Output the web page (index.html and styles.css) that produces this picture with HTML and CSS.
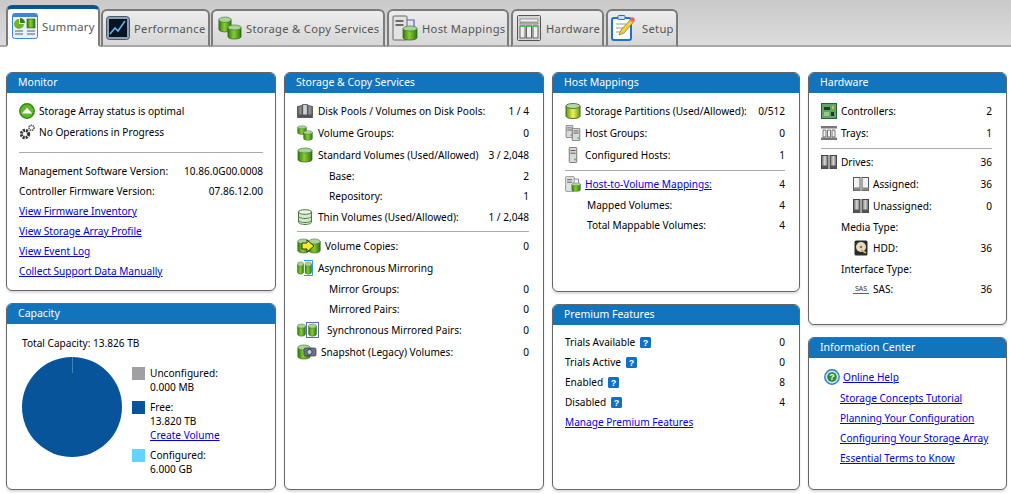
FILE: index.html
```html
<!DOCTYPE html>
<html lang="en">
<head>
    <meta charset="UTF-8">
    <title>Summary</title>
    <link rel="stylesheet" href="styles.css">
</head>
<body>
    <!-- shared icons -->
    <svg class="defs" width="0" height="0">
        <defs>
            <linearGradient id="green" x1="0" x2="1" y1="0" y2="0">
                <stop offset="0" stop-color="#2f7d12"/>
                <stop offset="0.45" stop-color="#8ccb2e"/>
                <stop offset="1" stop-color="#2c7a10"/>
            </linearGradient>
            <linearGradient id="yellow" x1="0" x2="1" y1="0" y2="0">
                <stop offset="0" stop-color="#5d9a12"/>
                <stop offset="0.5" stop-color="#f2f05a"/>
                <stop offset="1" stop-color="#6a9c14"/>
            </linearGradient>
            <linearGradient id="metal" x1="0" x2="1" y1="0" y2="0">
                <stop offset="0" stop-color="#5f5f5f"/>
                <stop offset="0.5" stop-color="#d8d8d8"/>
                <stop offset="1" stop-color="#666"/>
            </linearGradient>
            <symbol id="cyl" viewBox="0 0 16 16" preserveAspectRatio="none">
                <path d="M1 3.500v9c0 1.600 3 2.500 7 2.500s7-.9 7-2.500v-9z" fill="url(#green)" stroke="#2d5d1a" stroke-width=".7"/>
                <ellipse cx="8" cy="3.500" rx="7" ry="2.500" fill="#a9d39a" stroke="#4c7d3c" stroke-width=".7"/>
            </symbol>
            <symbol id="cyls" viewBox="0 0 16 16">
                <use href="#cyl" x="0" y="0" width="10" height="10"/>
                <use href="#cyl" x="6" y="5" width="10" height="11"/>
            </symbol>
            <symbol id="drives" viewBox="0 0 16 16">
                <rect x=".5" y="1.500" width="6.500" height="13" fill="url(#metal)" stroke="#444"/>
                <rect x="9" y="1.500" width="6.500" height="13" fill="url(#metal)" stroke="#444"/>
                <path d="M1 11.500h6v3H1zM9.500 11.500h6v3h-6z" fill="#555"/>
            </symbol>
            <symbol id="pool" viewBox="0 0 16 16">
                <path d="M.5 3.500L5 2.500v12H.5zM5.500 1.500h5v13h-5zM11 2.500l4.500 1v11H11z" fill="url(#metal)" stroke="#444" stroke-width=".8"/>
                <path d="M1 11.500h14v3H1z" fill="#555"/>
            </symbol>
            <symbol id="drives-light" viewBox="0 0 16 16">
                <rect x=".5" y="1.500" width="6.500" height="13" fill="#f2f2f2" stroke="#555"/>
                <rect x="9" y="1.500" width="6.500" height="13" fill="#f2f2f2" stroke="#555"/>
                <path d="M1 11.500h6v3H1zM9.500 11.500h6v3h-6z" fill="#888"/>
            </symbol>
            <symbol id="server" viewBox="0 0 12 18" preserveAspectRatio="none">
                <rect x="1.500" y=".5" width="9" height="17" rx="1" fill="#d9d9d9" stroke="#666"/>
                <path d="M3 4h6M3 7h6" stroke="#444"/>
                <rect x="7.500" y="13" width="2" height="2" fill="#2fd03a"/>
            </symbol>
            <symbol id="hostvol" viewBox="0 0 26 26">
                <rect x="1" y="1" width="14" height="24" rx="1" fill="#e2e2e2" stroke="#666"/>
                <path d="M3.500 6h8M3.500 10h8" stroke="#444" stroke-width="1.400"/>
                <path d="M15 5h7v7" fill="none" stroke="#5c5cc8" stroke-width="1.200"/>
                <use href="#cyl" x="10" y="10" width="16" height="16"/>
            </symbol>
            <symbol id="help" viewBox="0 0 11 11">
                <rect width="11" height="11" rx="1.500" fill="#1170c0"/>
                <text x="5.500" y="9" text-anchor="middle" font-family="Liberation Sans" font-weight="700" font-size="9" fill="#fff">?</text>
            </symbol>
        </defs>
    </svg>

    <nav class="tabbar">
        <a class="tab active">
            <svg class="tab-icon" viewBox="0 0 26 26">
                <rect x=".5" y=".5" width="25" height="25" rx="2" fill="#e8f1fb" stroke="#3d86d6"/>
                <rect x="1" y="1" width="24" height="3" fill="#3d86d6"/>
                <path d="M2 11a5 5 0 0 1 5-5v5h5a5 5 0 0 1-10 0z" fill="#6fb52a"/>
                <path d="M8 5a5 5 0 0 1 5 5H8z" fill="#3a7d18"/>
                <rect x="15" y="6" width="8" height="9" fill="url(#green)" stroke="#2d5d1a" stroke-width=".6"/>
                <path d="M3 18h8M3 21h8M15 18h8M15 21h8" stroke="#8a8a8a" stroke-width="1.300"/>
            </svg>
            <span>Summary</span>
        </a>
        <a class="tab tab-perf">
            <svg class="tab-icon" viewBox="0 0 24 24">
                <rect x=".5" y=".5" width="23" height="23" rx="3" fill="#8ea0b5" stroke="#4c5a6a"/>
                <rect x="3" y="3" width="18" height="18" fill="#0a1320"/>
                <path d="M4 18l5-6 3 3 7-10" fill="none" stroke="#5cb8f0" stroke-width="1.600"/>
            </svg>
            <span>Performance</span>
        </a>
        <a class="tab tab-storage">
            <svg class="tab-icon" viewBox="0 0 24 24">
                <use href="#cyl" x="0" y="0" width="14" height="17"/>
                <use href="#cyl" x="9" y="8" width="15" height="16"/>
            </svg>
            <span>Storage &amp; Copy Services</span>
        </a>
        <a class="tab tab-host">
            <svg class="tab-icon" viewBox="0 0 26 26"><use href="#hostvol"/></svg>
            <span>Host Mappings</span>
        </a>
        <a class="tab tab-hw">
            <svg class="tab-icon" viewBox="0 0 24 26">
                <rect x=".5" y=".5" width="23" height="25" rx="1" fill="#d5d5d5" stroke="#555"/>
                <path d="M3 4h18v3H3zM3 8h18v1H3z" fill="#f0f0f0" stroke="#666" stroke-width=".6"/>
                <rect x="3" y="11" width="5" height="12" fill="#eee" stroke="#444" stroke-width=".8"/>
                <rect x="9.500" y="11" width="5" height="12" fill="#eee" stroke="#444" stroke-width=".8"/>
                <rect x="16" y="11" width="5" height="12" fill="#eee" stroke="#444" stroke-width=".8"/>
                <path d="M3 11h5M9.500 11h5M16 11h5" stroke="#2ed03a" stroke-width="1.400"/>
            </svg>
            <span>Hardware</span>
        </a>
        <a class="tab tab-setup">
            <svg class="tab-icon" viewBox="0 0 24 26">
                <rect x="1" y="3" width="19" height="22" rx="2" fill="#fff" stroke="#1d73c8" stroke-width="2"/>
                <rect x="7" y=".5" width="7" height="4" rx="1" fill="#cfe0f2" stroke="#1d73c8"/>
                <path d="M5 9h10M5 13h7M5 17h5" stroke="#9a9a9a"/>
                <path d="M8 20l2-5L20 4l3 2.500L13 18z" fill="#f2d23a" stroke="#8a6d10" stroke-width=".7"/>
                <circle cx="21.500" cy="4.500" r="2.300" fill="#e8606a"/>
            </svg>
            <span>Setup</span>
        </a>
    </nav>

    <main class="dashboard">
        <div class="col col-1">
            <section class="panel panel-monitor">
                <h2>Monitor</h2>
                <div class="panel-body">
                    <div class="row">
                        <svg class="ico" viewBox="0 0 16 16"><circle cx="8" cy="8" r="7.200" fill="#62b82a" stroke="#2f8a12" stroke-width="1.500"/><path d="M2.800 10.500L8 4.800l5.200 5.700z" fill="#fff"/></svg>
                        <span class="label">Storage Array status is optimal</span>
                    </div>
                    <div class="row">
                        <svg class="ico" viewBox="0 0 16 16"><circle cx="6" cy="10" r="3.600" fill="none" stroke="#333" stroke-width="3.200" stroke-dasharray="2 .9"/><circle cx="12.500" cy="3.800" r="2.500" fill="none" stroke="#666" stroke-width="1.800" stroke-dasharray="1.500 .6"/></svg>
                        <span class="label">No Operations in Progress</span>
                    </div>
                    <hr class="sep-monitor">
                    <div class="row line"><span>Management Software Version:</span><span>10.86.0G00.0008</span></div>
                    <div class="row line"><span>Controller Firmware Version:</span><span>07.86.12.00</span></div>
                    <div class="row line"><a href="#">View Firmware Inventory</a></div>
                    <div class="row line"><a href="#">View Storage Array Profile</a></div>
                    <div class="row line"><a href="#">View Event Log</a></div>
                    <div class="row line"><a href="#">Collect Support Data Manually</a></div>
                </div>
            </section>
            <section class="panel panel-capacity">
                <h2>Capacity</h2>
                <div class="panel-body capacity-body">
                    <p class="total">Total Capacity: 13.826 TB</p>
                    <div class="capacity-chart">
                        <svg class="pie" viewBox="0 0 100 100"><circle cx="50" cy="50" r="50" fill="#07549a"/><path d="M50.500 0v16" stroke="#3f83bd"/></svg>
                        <div class="legend">
                            <div class="legend-item"><i class="swatch swatch-gray"></i><div>Unconfigured:<br>0.000 MB</div></div>
                            <div class="legend-item"><i class="swatch swatch-blue"></i><div>Free:<br>13.820 TB<br><a href="#">Create Volume</a></div></div>
                            <div class="legend-item"><i class="swatch swatch-cyan"></i><div>Configured:<br>6.000 GB</div></div>
                        </div>
                    </div>
                </div>
            </section>
        </div>

        <div class="col col-2">
            <section class="panel panel-fill">
                <h2>Storage &amp; Copy Services</h2>
                <div class="panel-body">
                    <div class="row"><svg class="ico" viewBox="0 0 16 16"><use href="#pool"/></svg><span class="label">Disk Pools / Volumes on Disk Pools:</span><span class="val">1 / 4</span></div>
                    <div class="row"><svg class="ico" viewBox="0 0 16 16"><use href="#cyls"/></svg><span class="label">Volume Groups:</span><span class="val">0</span></div>
                    <div class="row"><svg class="ico" viewBox="0 0 16 16"><use href="#cyl"/></svg><span class="label">Standard Volumes (Used/Allowed)</span><span class="val">3 / 2,048</span></div>
                    <div class="row line sub"><span>Base:</span><span>2</span></div>
                    <div class="row line sub"><span>Repository:</span><span>1</span></div>
                    <div class="row"><svg class="ico" viewBox="0 0 16 16"><path d="M1.500 3v10c0 1.500 3 2.500 6.500 2.500s6.500-1 6.500-2.500V3z" fill="#d8e8d0" stroke="#4a7a3a"/><path d="M1.500 7c0 1.500 3 2.500 6.500 2.500S14.500 8.500 14.500 7M1.500 11c0 1.500 3 2.500 6.500 2.500s6.500-1 6.500-2.500" fill="none" stroke="#4a7a3a"/><ellipse cx="8" cy="3" rx="6.500" ry="2.300" fill="#eef5ea" stroke="#4a7a3a"/></svg><span class="label">Thin Volumes (Used/Allowed):</span><span class="val">1 / 2,048</span></div>
                    <hr class="sep-storage">
                    <div class="row"><svg class="ico ico-wide" viewBox="0 0 24 16"><use href="#cyl" x="0" y="0" width="13" height="16"/><use href="#cyl" x="11" y="0" width="13" height="16"/><path d="M5 5h5V2l7 6-7 6v-3H5z" fill="#f5ee1e" stroke="#222" stroke-width=".9"/></svg><span class="label">Volume Copies:</span><span class="val">0</span></div>
                    <div class="row"><svg class="ico" viewBox="0 0 16 16"><use href="#cyl" x="0" y="1" width="7" height="14"/><use href="#cyl" x="7.500" y="1" width="7.500" height="14"/><path d="M7 .5h8.500v15H7" fill="none" stroke="#2a9ce8"/></svg><span class="label">Asynchronous Mirroring</span></div>
                    <div class="row line sub"><span>Mirror Groups:</span><span>0</span></div>
                    <div class="row line sub"><span>Mirrored Pairs:</span><span>0</span></div>
                    <div class="row"><svg class="ico ico-sync" viewBox="0 0 22 16"><use href="#cyl" x="0" y="1" width="9" height="14"/><use href="#cyl" x="11" y="1" width="9" height="14"/><rect x="9.500" y=".5" width="12" height="15" fill="none" stroke="#5a6ea8"/></svg><span class="label">Synchronous Mirrored Pairs:</span><span class="val">0</span></div>
                    <div class="row"><svg class="ico ico-snap" viewBox="0 0 20 16"><use href="#cyl" width="14" height="16"/><rect x="7" y="4" width="12" height="8" rx="1.500" fill="#6d7682" stroke="#333" stroke-width=".7"/><circle cx="12.500" cy="8" r="2.600" fill="#b9c8e6" stroke="#222" stroke-width=".7"/></svg><span class="label">Snapshot (Legacy) Volumes:</span><span class="val">0</span></div>
                </div>
            </section>
        </div>

        <div class="col col-3">
            <section class="panel panel-host">
                <h2>Host Mappings</h2>
                <div class="panel-body">
                    <div class="row"><svg class="ico" viewBox="0 0 16 16"><path d="M1 3v10c0 1.500 3 2.500 7 2.500s7-1 7-2.500V3z" fill="url(#yellow)" stroke="#3f6d12"/><ellipse cx="8" cy="3" rx="7" ry="2.500" fill="#b9d8a8" stroke="#4c7d3c"/></svg><span class="label">Storage Partitions (Used/Allowed):</span><span class="val">0/512</span></div>
                    <div class="row"><svg class="ico" viewBox="0 0 16 16"><use href="#server" x="0" y="0" width="9" height="13"/><use href="#server" x="6" y="3" width="10" height="13"/></svg><span class="label">Host Groups:</span><span class="val">0</span></div>
                    <div class="row"><svg class="ico" viewBox="0 0 16 16"><use href="#server" x="3" y="0" width="10" height="16"/></svg><span class="label">Configured Hosts:</span><span class="val">1</span></div>
                    <hr class="sep-host">
                    <div class="row"><svg class="ico" viewBox="0 0 26 26"><use href="#hostvol"/></svg><a class="label" href="#">Host-to-Volume Mappings:</a><span class="val">4</span></div>
                    <div class="row line sub-host"><span>Mapped Volumes:</span><span>4</span></div>
                    <div class="row line sub-host"><span>Total Mappable Volumes:</span><span>4</span></div>
                </div>
            </section>
            <section class="panel panel-premium">
                <h2>Premium Features</h2>
                <div class="panel-body">
                    <div class="row line"><span class="with-help">Trials Available <svg class="help"><use href="#help"/></svg></span><span>0</span></div>
                    <div class="row line"><span class="with-help">Trials Active <svg class="help"><use href="#help"/></svg></span><span>0</span></div>
                    <div class="row line"><span class="with-help">Enabled <svg class="help"><use href="#help"/></svg></span><span>8</span></div>
                    <div class="row line"><span class="with-help">Disabled <svg class="help"><use href="#help"/></svg></span><span>4</span></div>
                    <div class="row line"><a href="#">Manage Premium Features</a></div>
                </div>
            </section>
        </div>

        <div class="col col-4">
            <section class="panel panel-hardware">
                <h2>Hardware</h2>
                <div class="panel-body">
                    <div class="row"><svg class="ico" viewBox="0 0 16 16"><rect x=".5" y=".5" width="15" height="15" fill="#5fa468" stroke="#2c5d33"/><path d="M3 4h6v3H3zM10 9h3v4h-3z" fill="#1d3d22"/><path d="M3 10h5M3 12h5" stroke="#dfe8b0"/><path d="M11 3h2v3h-2z" fill="#d8c040"/></svg><span class="label">Controllers:</span><span class="val">2</span></div>
                    <div class="row"><svg class="ico" viewBox="0 0 16 16"><rect y="1" width="16" height="2.500" fill="#777"/><rect y="12.500" width="16" height="2.500" fill="#777"/><path d="M2 5h3v7H2zM6.500 5h3v7h-3zM11 5h3v7h-3z" fill="#f2f2f2" stroke="#555" stroke-width=".8"/></svg><span class="label">Trays:</span><span class="val">1</span></div>
                    <hr class="sep-hw">
                    <div class="row"><svg class="ico" viewBox="0 0 16 16"><use href="#drives"/></svg><span class="label">Drives:</span><span class="val">36</span></div>
                    <div class="row sub-hw"><svg class="ico" viewBox="0 0 16 16"><use href="#drives-light"/></svg><span class="label">Assigned:</span><span class="val">36</span></div>
                    <div class="row sub-hw"><svg class="ico" viewBox="0 0 16 16"><use href="#drives"/></svg><span class="label">Unassigned:</span><span class="val">0</span></div>
                    <div class="row line head-hw"><span>Media Type:</span></div>
                    <div class="row sub-hw"><svg class="ico" viewBox="0 0 16 16"><rect x="1.500" y=".5" width="13" height="15" rx="1.500" fill="#2a2a2a"/><circle cx="8" cy="7" r="5" fill="#e8dcc0"/><circle cx="8" cy="7" r="1.300" fill="#777"/><path d="M13 13L8 10" stroke="#e0b040" stroke-width="1.600"/></svg><span class="label">HDD:</span><span class="val">36</span></div>
                    <div class="row line head-hw"><span>Interface Type:</span></div>
                    <div class="row sub-hw sas-row"><span class="sas">SAS</span><span class="label">SAS:</span><span class="val">36</span></div>
                </div>
            </section>
            <section class="panel panel-info">
                <h2>Information Center</h2>
                <div class="panel-body">
                    <div class="row line info-first">
                        <svg class="ico" viewBox="0 0 16 16"><circle cx="8" cy="8" r="7.200" fill="#cfe6f7" stroke="#2c7ec8" stroke-width="1.400"/><circle cx="8" cy="8" r="4.800" fill="#2f8a3a"/><text x="8" y="11" text-anchor="middle" font-family="Liberation Sans" font-weight="700" font-size="9" fill="#fff">?</text></svg>
                        <a href="#">Online Help</a>
                    </div>
                    <div class="row line info-link"><a href="#">Storage Concepts Tutorial</a></div>
                    <div class="row line info-link"><a href="#">Planning Your Configuration</a></div>
                    <div class="row line info-link"><a href="#">Configuring Your Storage Array</a></div>
                    <div class="row line info-link"><a href="#">Essential Terms to Know</a></div>
                </div>
            </section>
        </div>
    </main>
</body>
</html>
```

FILE: styles.css
```css
* {
    margin: 0;
    padding: 0;
    box-sizing: border-box;
}

body {
    width: 1011px;
    height: 494px;
    overflow: hidden;
    background: #fff;
    color: #000;
    font-family: "Noto Sans", "Liberation Sans", sans-serif;
    font-size: 10.1px;
}

a {
    color: #0000e0;
    text-decoration: underline;
}

.defs {
    display: block;
    height: 0;
}

/* Tabs */
.tabbar {
    display: flex;
    align-items: flex-end;
    height: 47px;
    padding-left: 6px;
    gap: 1px;
    background: linear-gradient(#c9c9c9, #dcdcdc);
    border-bottom: 2px solid #a9a9a9;
}

.tab {
    display: flex;
    align-items: center;
    flex: none;
    height: 38px;
    margin-bottom: -2px;
    padding: 0 0 0 3px;
    gap: 4px;
    background: linear-gradient(#ededed, #d6d6d6);
    border: 2px solid #7b7b7b;
    border-bottom: 2px solid #a9a9a9;
    border-radius: 6px 6px 0 0;
    color: #555;
    font-size: 11.2px;
    letter-spacing: .3px;
    white-space: nowrap;
    text-decoration: none;
}

.tab.active {
    height: 42px;
    width: 94px;
    background: #fff;
    border-top: 4px solid #07549a;
    border-bottom-color: #fff;
    padding: 0 0 2px 4px;
}

.tab-icon {
    flex: none;
    width: 26px;
    height: 26px;
}

.tab-perf .tab-icon,
.tab-storage .tab-icon,
.tab-hw .tab-icon,
.tab-setup .tab-icon {
    width: 24px;
}

.tab-perf { width: 109px; }
.tab-storage { width: 174px; padding-left: 5px; }
.tab-host { width: 122px; margin-left: 1px; padding-left: 3px; }
.tab-hw { width: 93px; margin-left: 1px; padding-left: 4px; gap: 5px; }
.tab-setup { width: 72px; margin-left: 1px; padding-left: 3px; gap: 7px; }

/* Panels */
.dashboard {
    display: flex;
    height: 447px;
    padding: 25px 4px 4px 6px;
    gap: 8px;
}

.col {
    display: flex;
    flex: none;
    flex-direction: column;
    gap: 12px;
}

.col-1 { width: 270px; }
.col-2 { width: 260px; }
.col-3 { width: 248px; }
.col-4 { width: 199px; }

.panel {
    display: flex;
    flex-direction: column;
    background: #fff;
    border: 1px solid #666;
    border-radius: 6px;
    box-shadow: 0 2px 2px #ddd;
    overflow: hidden;
}

.panel h2 {
    flex: none;
    height: 20px;
    padding-left: 11px;
    background: #1174bc;
    color: #fff;
    font-size: 10.5px;
    font-weight: 400;
    line-height: 19px;
}

.panel-body {
    padding: 7px 14px 0 12px;
}

.panel-monitor .panel-body {
    padding-right: 12px;
}

.panel-fill,
.panel-premium,
.panel-capacity,
.panel-info {
    flex: 1;
}

.panel-monitor { height: 219px; }
.panel-host { height: 220px; }
.panel-hardware { height: 253px; }

/* Rows */
.row {
    display: flex;
    align-items: center;
    height: 22px;
    white-space: nowrap;
}

.panel-monitor .row {
    height: 21px;
}

.row.line,
.panel-monitor .row.line {
    justify-content: space-between;
    height: 20px;
}

.ico {
    flex: none;
    width: 16px;
    height: 16px;
    margin-right: 4px;
}

.col-2 .ico {
    margin-right: 5px;
}

.col-2 .ico-wide { width: 24px; margin-right: 4px; }
.col-2 .ico-sync { width: 22px; margin-right: 8px; }
.col-2 .ico-snap { width: 20px; margin-right: 4px; }

.label {
    flex: 1;
}

.val {
    flex: none;
    text-align: right;
}

.row.sub {
    padding-left: 32px;
}

.sub-host {
    padding-left: 22px;
}

hr {
    height: 1px;
    border: 0;
    background: #aaa;
}

.sep-monitor { margin: 10px 0 8px; }
.sep-storage { margin: 3px 0 3px; }
.sep-host { margin: 4px 0 2px; }
.sep-hw { margin: 4px 0 2px; }

/* Capacity */
.capacity-body {
    padding: 11px 15px 0;
}

.total {
    line-height: 16px;
}

.capacity-chart {
    display: flex;
    gap: 10px;
    margin-top: 6px;
}

.pie {
    flex: none;
    width: 100px;
    height: 100px;
}

.legend {
    display: flex;
    flex-direction: column;
    gap: 6px;
    padding-top: 9px;
    line-height: 14px;
}

.legend-item {
    display: flex;
    gap: 5px;
}

.swatch {
    flex: none;
    width: 13px;
    height: 13px;
    margin-top: 1px;
}

.swatch-gray { background: #a0a0a4; }
.swatch-blue { background: #07549a; }
.swatch-cyan { background: #66d3ff; }

/* Premium */
.with-help {
    display: flex;
    align-items: center;
    gap: 5px;
}

.help {
    width: 11px;
    height: 11px;
}

/* Hardware */
.row.sub-hw {
    padding-left: 32px;
}

.panel-hardware .sub-hw .ico {
    margin-right: 4px;
}

.head-hw {
    padding-left: 20px;
}

.sas-row {
    height: 20px;
}

.sas {
    flex: none;
    width: 16px;
    margin-right: 4px;
    border-bottom: 1px solid #1b9a10;
    color: #333;
    font-size: 7px;
    line-height: 8px;
    text-align: center;
}

/* Information center */
.row.info-first {
    justify-content: flex-start;
    margin-bottom: 1px;
    padding-left: 3px;
}

.info-first .ico {
    margin-right: 3px;
}

.info-link {
    padding-left: 19px;
}

.panel-info .panel-body {
    padding-top: 9px;
}
```
